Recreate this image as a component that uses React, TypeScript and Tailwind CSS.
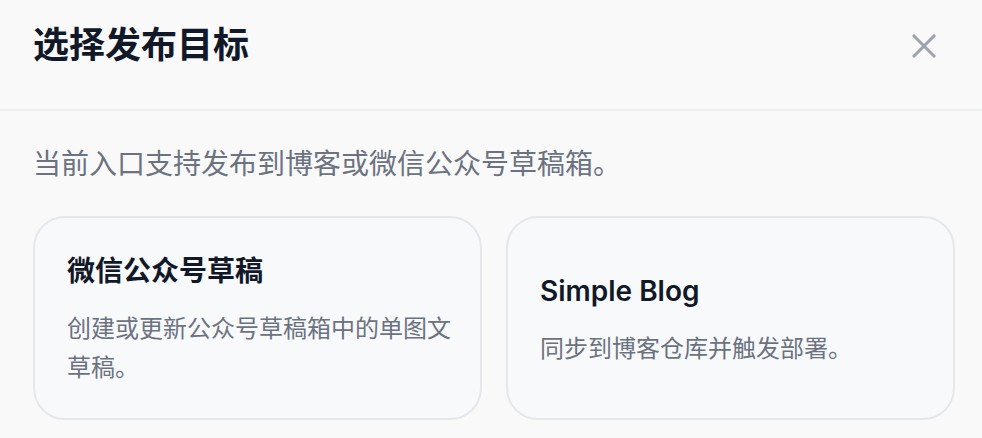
import React from "react";

function Card({ title, desc }: { title: string; desc: string }) {
  return (
    <div className="flex flex-col justify-center rounded-[32px] border-2 border-[#e5e7eb] bg-[#f8f9fb] pl-[32px] pr-[24px] pt-[35px] pb-[31px]">
      <div className="text-[28px] font-semibold leading-[36px] text-[#111827]">{title}</div>
      <div className="mt-[20px] text-[24px] leading-[39px] text-[#6b7280]">{desc}</div>
    </div>
  );
}

export default function App() {
  return (
    <div className="w-[982px] h-[438px] overflow-hidden bg-[#f9f9fa] font-['Inter','Noto_Sans_CJK_SC',sans-serif]">
      <div className="flex h-[111px] items-start justify-between border-b-2 border-[#eeeff1] pl-[33px] pr-[38px] pt-[27px]">
        <h1 className="text-[36px] font-bold leading-[36px] text-[#111827]">选择发布目标</h1>
        <button className="mt-[-1px] flex h-[40px] w-[40px] items-center justify-center">
          <svg width="24" height="24" viewBox="0 0 24 24" fill="none" stroke="#9ca3af" strokeWidth="3" strokeLinecap="square">
            <path d="M2 2 22 22" />
            <path d="M22 2 2 22" />
          </svg>
        </button>
      </div>
      <div className="px-[33px] pt-[33px]">
        <p className="text-[28px] leading-[40px] text-[#6b7280]">当前入口支持发布到博客或微信公众号草稿箱。</p>
        <div className="mt-[32px] grid grid-cols-[449px_449px] gap-[24px]">
          <Card title="微信公众号草稿" desc="创建或更新公众号草稿箱中的单图文草稿。" />
          <Card title="Simple Blog" desc="同步到博客仓库并触发部署。" />
        </div>
      </div>
    </div>
  );
}
